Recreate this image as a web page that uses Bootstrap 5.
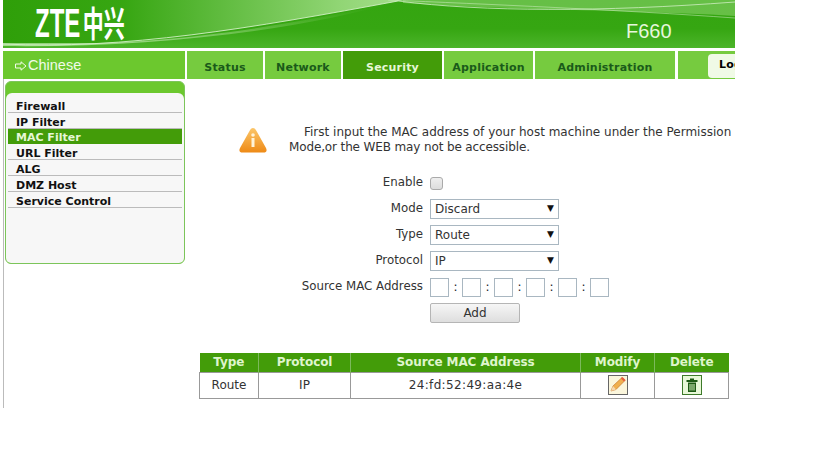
<!DOCTYPE html>
<html lang="en">
<head>
<meta charset="UTF-8">
<title>F660</title>
<link href="https://cdn.jsdelivr.net/npm/bootstrap@5.3.3/dist/css/bootstrap.min.css" rel="stylesheet">
<style>
body { background: #fff; margin: 0; width: 819px; height: 460px; overflow: hidden; font-family: "DejaVu Sans", Verdana, sans-serif; font-size: 12px; color: #333; }
.page-wrap { width: 735px; height: 408px; padding-left: 3px; overflow: hidden; }
.top-head { position: relative; height: 48px; background: linear-gradient(180deg, #34a510 0%, #36a612 60%, #4cb52a 100%); overflow: hidden; }
.top-head svg { position: absolute; left: 0; top: 0; }
.logo-text { position: absolute; left: 32px; top: 0; color: #fff; font-family: "Liberation Sans", sans-serif; font-weight: 700; font-size: 40px; line-height: 44px; transform: scaleX(.6); transform-origin: left top; white-space: nowrap; }
.logo-text span { font-family: "Noto Sans CJK SC", sans-serif; font-size: 35px; margin-left: 4px; }
.model-name { position: absolute; left: 623px; top: 19px; color: #e6f7dc; font-family: "Liberation Sans", sans-serif; font-size: 20px; line-height: 24px; }
.tab-row { margin-top: 3px; height: 28px; gap: 2px; }
.tab-item { flex: none; background: #76cb3f; color: #1a5a1a; font-weight: 700; font-size: 11px; letter-spacing: .2px; display: flex; align-items: center; justify-content: center; padding-top: 7px; }
.tab-lang { width: 182px; background: #6cc82e; color: #f1fbe8; font-family: "Liberation Sans", sans-serif; font-size: 14.5px; font-weight: 400; letter-spacing: 0; justify-content: flex-start; padding: 2px 0 0 12px; gap: 1px; }
.tab-active { background: #439c09; color: #e6f7d6; }
.tab-rest { width: 60px; margin-left: 1px; justify-content: flex-start; padding: 1px 0 0 30px; overflow: hidden; }
.logout-btn { flex: none; background: #f0fae6; color: #000; border-radius: 4px; height: 24px; width: 60px; padding: 3px 0 0 11px; font-size: 11px; }
.body-row { height: 329px; border-left: 1px solid #bbb; }
.side-box { width: 180px; height: 183px; margin: 2px 0 0 1px; border: 1px solid #7cc55a; border-radius: 6px; background: #6cc82e; flex: none; overflow: hidden; padding-top: 11px; }
.side-panel { height: 100%; background: #f7f7f7; border-radius: 6px 6px 0 0; padding: 4px 2px 0 2px; }
.side-panel a { display: block; height: 16px; line-height: 20px; padding-left: 8px; color: #111; font-weight: 700; font-size: 11px; text-decoration: none; border-bottom: 1px solid #bbb; }
.side-panel a.is-on { background: #439c09; color: #e6f7d6; border-bottom-color: #439c09; height: 15px; line-height: 18px; }
.main-area { flex: 1; min-width: 0; }
.notice-row { margin: 46px 0 0 53px; gap: 21px; width: 530px; }
.notice-text { width: 500px; font-size: 12px; line-height: 15px; color: #333; white-space: nowrap; text-indent: 15px; }
.notice-text span { text-indent: 0; letter-spacing: -.13px; }
.form-zone { margin-top: 15px; }
.form-line { height: 26px; align-items: center; }
.form-lbl { width: 245px; text-align: right; padding-right: 7px; flex: none; font-size: 11.8px; }
.sel-box { width: 129px; height: 20px; border: 1px solid #a9b7c1; padding: 0 4px; font-size: 12px; color: #333; background: #fff; }
.sel-arrow { font-size: 9px; color: #111; }
.check-box { width: 13px; height: 13px; border: 1px solid #aaa; border-radius: 3px; background: linear-gradient(#eee, #ddd); }
.mac-cell { width: 19px; height: 19px; border: 1px solid #a9b7c1; background: #fff; }
.mac-sep { width: 13px; text-align: center; color: #222; }
.add-btn { width: 90px; height: 20px; border: 1px solid #b5b5b5; border-radius: 2px; background: linear-gradient(#f6f6f6, #dedede); color: #333; font-size: 12px; line-height: 18px; text-align: center; }
.mac-table { margin: 27px 0 0 14px; width: 529px; border-collapse: collapse; table-layout: fixed; font-size: 12px; }
.mac-table th { background: #439c09; color: #dff5cc; font-size: 12px; font-weight: 700; letter-spacing: -.1px; height: 19px; padding: 0; text-align: center; border-left: 1px solid #7cb95c; }
.mac-table th:first-child { border-left: 0; }
.mac-table td { height: 26px; padding: 0; text-align: center; border: 1px solid #999; color: #333; }
.mac-val { letter-spacing: .35px; }
.tool-icon { display: block; margin: 0 auto; }
</style>
</head>
<body>
<div class="page-wrap">
  <div class="top-head">
    <svg width="732" height="48" viewBox="0 0 732 48">
      <defs>
        <linearGradient id="g1" x1="0" y1="0" x2="1" y2="0"><stop offset="0" stop-color="#2f9f09"/><stop offset=".3" stop-color="#37a612"/><stop offset=".85" stop-color="#92d676"/><stop offset="1" stop-color="#a4dd8b"/></linearGradient>
        <linearGradient id="g2" x1="0" y1="0" x2="0" y2="1"><stop offset="0" stop-color="#37a612" stop-opacity="0"/><stop offset="1" stop-color="#c5ebb4" stop-opacity=".75"/></linearGradient>
      </defs>
      <path d="M0 44C120 50 250 28 395 1L400 0H0Z" fill="url(#g1)"/>
      <path d="M0 43H80C150 43 260 32 395 1C300 30 150 48 0 46Z" fill="url(#g2)"/>
      <path d="M400 0H732V16C640 10 500 10 400 3Z" fill="#8fd672" opacity=".55"/>
      <path d="M0 44C120 50 250 28 395 1" fill="none" stroke="#d8f2cc" stroke-width="1" opacity=".85"/>
      <path d="M395 1C480 12 600 12 732 2" fill="none" stroke="#d6f0ca" stroke-width="1" opacity=".75"/>
      <path d="M385 0C480 4 620 10 732 18" fill="none" stroke="#d6f0ca" stroke-width="1" opacity=".5"/>
    </svg>
    <div class="logo-text">ZTE<span>中兴</span></div>
    <div class="model-name">F660</div>
  </div>
  <div class="tab-row d-flex">
    <div class="tab-item tab-lang">
      <svg width="12" height="10" viewBox="0 0 12 10"><path d="M.5 3H6V.8L11 5 6 9.2V7H.5Z" fill="none" stroke="#f1fbe8" stroke-width="1"/></svg>
      <span>Chinese</span>
    </div>
    <div class="tab-item" style="width:76px">Status</div>
    <div class="tab-item" style="width:76px">Network</div>
    <div class="tab-item tab-active" style="width:99px">Security</div>
    <div class="tab-item" style="width:89px">Application</div>
    <div class="tab-item" style="width:140px">Administration</div>
    <div class="tab-item tab-rest"><div class="logout-btn">Logout</div></div>
  </div>
  <div class="body-row d-flex">
    <div class="side-box">
      <div class="side-panel">
        <a href="#">Firewall</a>
        <a href="#">IP Filter</a>
        <a href="#" class="is-on">MAC Filter</a>
        <a href="#">URL Filter</a>
        <a href="#">ALG</a>
        <a href="#">DMZ Host</a>
        <a href="#">Service Control</a>
      </div>
    </div>
    <div class="main-area">
      <div class="notice-row d-flex align-items-center">
        <svg width="30" height="28" viewBox="0 0 30 28" class="flex-shrink-0">
          <defs><linearGradient id="w1" x1="0" y1="0" x2="0" y2="1"><stop offset="0" stop-color="#fbc66a"/><stop offset="1" stop-color="#ee8a16"/></linearGradient></defs>
          <path d="M15 2C16.500 2 17.500 3 18.500 5L28 22C29.500 25 28 26.500 25.500 26.500H4.500C2 26.500 .5 25 2 22L11.500 5C12.500 3 13.500 2 15 2Z" fill="url(#w1)"/>
          <rect x="13.500" y="12" width="3" height="9" fill="#fff3d8"/><circle cx="15" cy="9" r="1.800" fill="#fff3d8"/>
        </svg>
        <div class="notice-text">First input the MAC address of your host machine under the Permission<br><span class="d-inline-block">Mode,or the WEB may not be accessible.</span></div>
      </div>
      <div class="form-zone">
        <div class="form-line d-flex"><div class="form-lbl">Enable</div><div class="check-box"></div></div>
        <div class="form-line d-flex"><div class="form-lbl">Mode</div><div class="sel-box d-flex justify-content-between align-items-center"><span>Discard</span><span class="sel-arrow">▼</span></div></div>
        <div class="form-line d-flex"><div class="form-lbl">Type</div><div class="sel-box d-flex justify-content-between align-items-center"><span>Route</span><span class="sel-arrow">▼</span></div></div>
        <div class="form-line d-flex"><div class="form-lbl">Protocol</div><div class="sel-box d-flex justify-content-between align-items-center"><span>IP</span><span class="sel-arrow">▼</span></div></div>
        <div class="form-line d-flex"><div class="form-lbl">Source MAC Address</div><div class="mac-cell"></div><div class="mac-sep">:</div><div class="mac-cell"></div><div class="mac-sep">:</div><div class="mac-cell"></div><div class="mac-sep">:</div><div class="mac-cell"></div><div class="mac-sep">:</div><div class="mac-cell"></div><div class="mac-sep">:</div><div class="mac-cell"></div></div>
        <div class="form-line d-flex"><div class="form-lbl"></div><div class="add-btn">Add</div></div>
      </div>
      <table class="mac-table">
        <colgroup><col style="width:59px"><col style="width:92px"><col style="width:230px"><col style="width:74px"><col style="width:74px"></colgroup>
        <thead><tr><th>Type</th><th>Protocol</th><th>Source MAC Address</th><th>Modify</th><th>Delete</th></tr></thead>
        <tbody><tr><td>Route</td><td>IP</td><td class="mac-val">24:fd:52:49:aa:4e</td>
          <td><svg class="tool-icon" width="20" height="20" viewBox="0 0 20 20"><rect x=".5" y=".5" width="19" height="19" fill="#fbf6dc" stroke="#666"/><path d="M3 16L5 11 14 2.500 17 5.500 8 14.500Z" fill="#f0b050" stroke="#c06a20" stroke-width=".6"/><path d="M13 3.500L14.500 2 17.500 5 16 6.500Z" fill="#e85a40"/><path d="M3 16L5 11 8 14.500Z" fill="#f6d8b0"/></svg></td>
          <td><svg class="tool-icon" width="20" height="20" viewBox="0 0 20 20"><rect x=".5" y=".5" width="19" height="19" fill="#e8f8d8" stroke="#3d7a2a"/><path d="M8 3.500H12V5H8ZM4.500 5H15.500V7H4.500Z" fill="#1d5a14"/><path d="M6 7.500H14V17H6Z" fill="#1d5a14"/><path d="M8 9V15.500M10 9V15.500M12 9V15.500" stroke="#d8f4c0" stroke-width="1"/></svg></td></tr></tbody>
      </table>
    </div>
  </div>
</div>
</body>
</html>
